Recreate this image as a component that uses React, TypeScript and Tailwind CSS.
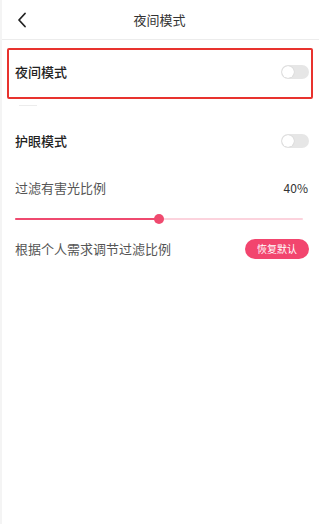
import React from 'react';

const font = { fontFamily: '"Noto Sans CJK SC", "Noto Sans", sans-serif' };

function Toggle() {
  return (
    <div className="relative w-[28px] h-[14px] rounded-full bg-[#e6e6e6]">
      <div className="absolute left-[1px] top-[1px] w-[12px] h-[12px] rounded-full bg-white shadow-[0_0_1px_rgba(0,0,0,0.25)]" />
    </div>
  );
}

export default function App() {
  const pct = 40;
  return (
    <div
      className="w-[319px] h-[524px] bg-white border-l-2 border-[#f4f4f4] flex flex-col overflow-hidden"
      style={font}
    >
      {/* Header */}
      <div className="relative h-10 flex items-center justify-center border-b border-[#ececec] pr-[2px]">
        <svg
          className="absolute left-[15px] top-[12px]"
          width="10"
          height="16"
          viewBox="0 0 10 16"
          fill="none"
        >
          <path d="M8 1.5 L2 8 L8 14.5" stroke="#222" strokeWidth="1.8" strokeLinecap="round" strokeLinejoin="round" />
        </svg>
        <span className="text-[13px] text-[#333]">夜间模式</span>
      </div>

      {/* Highlighted night mode row */}
      <div className="mt-2 ml-[5px] w-[306px] h-[51px] border-2 border-[#e8322e] rounded-[2px] flex items-center justify-between pl-[6px] pr-[2px] pb-[3px]">
        <span className="text-[13px] font-medium text-[#222]">夜间模式</span>
        <Toggle />
      </div>
      <div className="mt-[6px] ml-[17px] w-[18px] h-px bg-[#ececec]" />

      {/* Eye care */}
      <div className="mt-[15px] h-10 flex items-center justify-between pl-[13px] pr-[10px]">
        <span className="text-[13px] font-medium text-[#222]">护眼模式</span>
        <Toggle />
      </div>

      <div className="mt-[12px] h-[30px] flex items-center justify-between pl-[13px] pr-[11px]">
        <span className="text-[13px] text-[#555]">过滤有害光比例</span>
        <span className="text-[12px] text-[#333]">{pct}%</span>
      </div>

      {/* Slider */}
      <div className="mt-[6px] h-5 ml-[13px] w-[288px] relative flex items-center">
        <div className="h-[2px] w-full bg-[#fcd3dd] rounded-full" />
        <div className="absolute left-0 h-[2px] bg-[#ef4a6f] rounded-full" style={{ width: `${pct * 3.6}px` }} />
        <div
          className="absolute w-[10px] h-[10px] rounded-full bg-[#ef4a6f]"
          style={{ left: `${pct * 3.6 - 5}px` }}
        />
      </div>

      <div className="mt-[5px] h-[30px] flex items-center justify-between pl-[13px] pr-[10px]">
        <span className="text-[13px] text-[#555]">根据个人需求调节过滤比例</span>
        <button className="w-16 h-5 rounded-full bg-[#f2456e] text-white text-[10px] leading-none flex items-center justify-center">
          恢复默认
        </button>
      </div>
    </div>
  );
}
